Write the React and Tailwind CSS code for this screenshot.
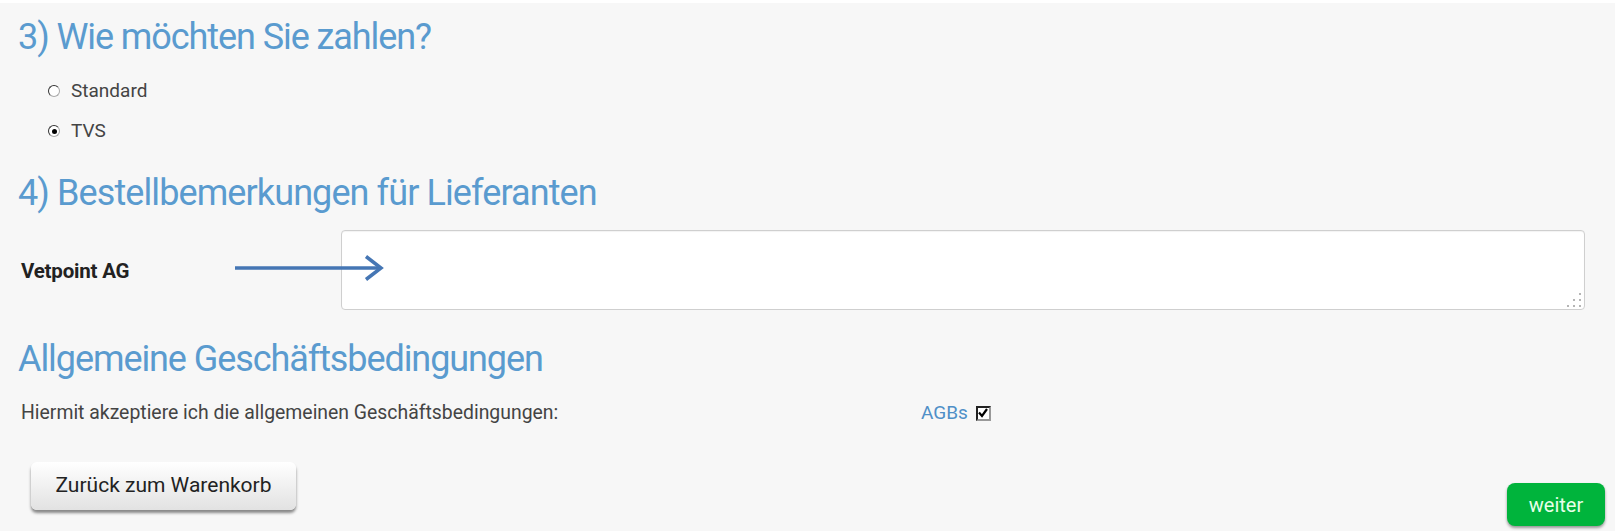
import React from 'react';

const font = { fontFamily: 'Roboto, "Liberation Sans", sans-serif' };

function Radio({ checked }) {
  return (
    <span className="inline-flex h-[12px] w-[12px] shrink-0 items-center justify-center rounded-full border-[1.5px] border-[#333] border-r-[#aaa] border-b-[#aaa] bg-white">
      {checked && <span className="h-[5px] w-[5px] rounded-full bg-black" />}
    </span>
  );
}

export default function App() {
  return (
    <div className="min-h-screen bg-white pt-[3px] pr-[2px] text-[#333]" style={font}>
      <div className="flex h-[528px] w-full flex-col bg-[#f7f7f7] pl-[18px]">
        <h2 className="mt-[13px] h-[42px] text-[36px] leading-[42px] tracking-[-0.03em] text-[#5a9bcf]">
          3) Wie möchten Sie zahlen?
        </h2>

        <div className="ml-[30px] mt-[23px] flex flex-col gap-[20px] text-[19px] text-[#444]">
          <label className="flex h-[20px] items-center gap-[11px]">
            <Radio />
            <span>Standard</span>
          </label>
          <label className="flex h-[20px] items-center gap-[11px]">
            <Radio checked />
            <span>TVS</span>
          </label>
        </div>

        <h2 className="mt-[31px] h-[42px] text-[36px] leading-[42px] tracking-[-0.025em] text-[#5a9bcf]">
          4) Bestellbemerkungen für Lieferanten
        </h2>

        <div className="mt-[16px] flex h-[80px] items-stretch">
          <div className="relative flex w-[323px] shrink-0 items-center pt-[2px]">
            <span className="ml-[3px] text-[20.5px] font-bold tracking-[-0.01em] text-[#222]">Vetpoint AG</span>
            <svg width="150" height="26" viewBox="0 0 150 26" className="absolute left-[217px] top-[25px] z-10 overflow-visible">
              <line x1="0" y1="13" x2="145" y2="13" stroke="#4576b4" strokeWidth="3.5" />
              <polyline points="131,1.5 146,13 131,24.5" fill="none" stroke="#4576b4" strokeWidth="3.5" />
            </svg>
          </div>
          <div className="relative">
            <textarea className="block h-[80px] w-[1244px] resize-none rounded-[4px] border border-[#cfcfcf] bg-white shadow-[inset_0_1px_1px_rgba(0,0,0,0.05)] outline-none" />
            <svg width="16" height="16" viewBox="0 0 16 16" className="absolute bottom-[2px] right-[2px]">
              <g fill="#b5b5b5">
                <rect x="12" y="1" width="2" height="2" />
                <rect x="6" y="7" width="2" height="2" />
                <rect x="12" y="7" width="2" height="2" />
                <rect x="0" y="13" width="2" height="2" />
                <rect x="6" y="13" width="2" height="2" />
                <rect x="12" y="13" width="2" height="2" />
              </g>
            </svg>
          </div>
        </div>

        <h2 className="mt-[28px] h-[42px] text-[36px] leading-[42px] tracking-[-0.03em] text-[#5a9bcf]">
          Allgemeine Geschäftsbedingungen
        </h2>

        <div className="mt-[21px] flex h-[24px] items-center text-[19px] text-[#444]">
          <span className="ml-[3px] w-[900px] text-[19.4px]">Hiermit akzeptiere ich die allgemeinen Geschäftsbedingungen:</span>
          <span className="text-[#4f8fc7]">AGBs</span>
          <span className="ml-[8px] flex h-[15px] w-[15px] items-center justify-center border-2 border-[#222] border-r-[#999] border-b-[#999] bg-white">
            <svg width="10" height="10" viewBox="0 0 10 10">
              <polyline points="1,4.5 4,8 9,1" fill="none" stroke="#000" strokeWidth="2.2" />
            </svg>
          </span>
        </div>

        <div className="mt-[37px] flex items-start justify-between pr-[10px]">
          <button className="ml-[13px] h-[48px] w-[265px] rounded-[6px] bg-gradient-to-b from-white to-[#e2e2e2] text-[21px] text-[#222] shadow-[0_3px_3px_rgba(0,0,0,0.45)]">
            Zurück zum Warenkorb
          </button>
          <button className="mt-[21px] h-[43px] w-[98px] rounded-[8px] bg-[#00b43c] text-[20px] text-[#e8ffe8] shadow-[0_2px_3px_rgba(0,0,0,0.4)]">
            weiter
          </button>
        </div>
      </div>
    </div>
  );
}
